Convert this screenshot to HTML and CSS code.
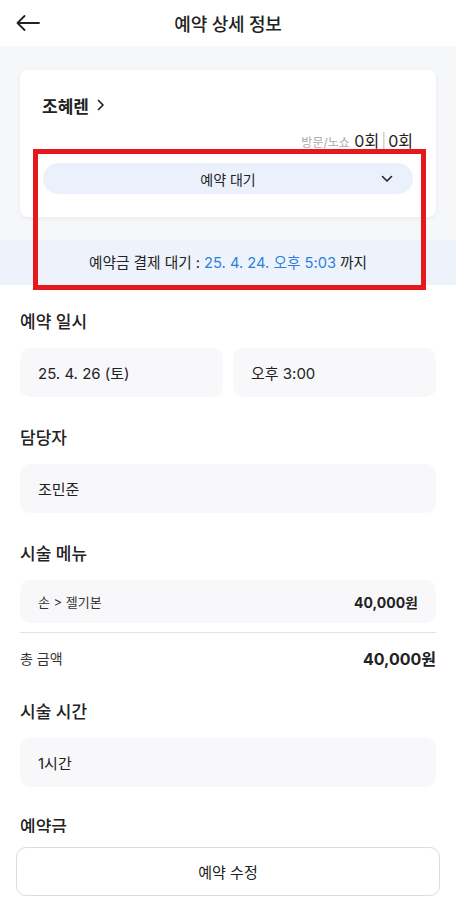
FILE: index.html
```html
<!DOCTYPE html>
<html lang="ko">
<head>
<meta charset="utf-8">
<title>예약 상세 정보</title>
<link rel="stylesheet" href="styles.css">
</head>
<body>
<div class="app">
  <header class="topbar">
    <button class="back" aria-label="뒤로">
      <svg width="24" height="16" viewBox="0 0 24 16" fill="none" stroke="#222" stroke-width="1.8" stroke-linecap="round" stroke-linejoin="round"><path d="M23 8H1.5M8.5 1L1.5 8l7 7"/></svg>
    </button>
    <h1 class="title">예약 상세 정보</h1>
  </header>

  <section class="hero">
    <div class="card">
      <div class="name">조혜렌 <svg class="name-chev" width="9" height="14" viewBox="0 0 9 14" fill="none" stroke="#222" stroke-width="1.7" stroke-linecap="round" stroke-linejoin="round"><path d="M2.5 2.5l4.5 4.5-4.5 4.5"/></svg></div>
      <div class="visits"><span class="visits-label">방문/노쇼</span> <span class="visits-num">0회</span><span class="visits-sep">|</span><span class="visits-num">0회</span></div>
      <div class="status">
        <span>예약 대기</span>
        <svg class="status-chev" width="12" height="8" viewBox="0 0 12 8" fill="none" stroke="#222" stroke-width="1.6" stroke-linecap="round" stroke-linejoin="round"><path d="M1.5 1.5L6 6l4.5-4.5"/></svg>
      </div>
    </div>
  </section>
  <div class="notice">예약금 결제 대기 : <span class="blue">25. 4. 24. 오후 5:03</span> 까지</div>

  <main class="content">
    <h2 class="label">예약 일시</h2>
    <div class="row2">
      <div class="box">25. 4. 26 (토)</div>
      <div class="box">오후 3:00</div>
    </div>

    <h2 class="label">담당자</h2>
    <div class="box">조민준</div>

    <h2 class="label">시술 메뉴</h2>
    <div class="box menu"><span class="menu-name">손 &gt; 젤기본</span><span class="menu-price">40,000원</span></div>
    <div class="total"><span class="total-label">총 금액</span><span class="total-price">40,000원</span></div>

    <h2 class="label">시술 시간</h2>
    <div class="box">1시간</div>

    <h2 class="label">예약금</h2>
  </main>

  <footer class="bottom">
    <button class="edit">예약 수정</button>
  </footer>

  <div class="highlight"></div>
</div>
</body>
</html>
```
FILE: styles.css
```css
* { box-sizing: border-box; }
html, body { margin: 0; padding: 0; }
body {
  font-family: "Inter", "Noto Sans CJK KR", sans-serif;
  color: #222;
  background: #fff;
  width: 456px;
  height: 908px;
  overflow: hidden;
}
.app { position: relative; width: 456px; height: 908px; overflow: hidden; }

.topbar {
  height: 46px;
  display: flex;
  align-items: center;
  justify-content: center;
  position: relative;
}
.back {
  position: absolute;
  left: 16px;
  top: 14px;
  border: 0;
  background: none;
  padding: 0;
  width: 26px;
  height: 18px;
  display: flex;
  align-items: center;
}
.title {
  margin: 0;
  font-size: 18px;
  font-weight: 500;
  letter-spacing: -0.2px;
  color: #222;
}

.hero {
  background: #f6f7f9;
  padding: 24px 20px 23px;
}
.card {
  background: #fff;
  border-radius: 8px;
  box-shadow: 0 1px 4px rgba(40, 60, 110, 0.07);
  padding: 24px 22px 22px;
  height: 147px;
}
.name {
  font-size: 17px;
  font-weight: 600;
  display: flex;
  align-items: center;
  gap: 7px;
  height: 22px;
}
.visits {
  text-align: right;
  margin-top: 15px;
  height: 20px;
  line-height: 20px;
  margin-right: 1px;
}
.visits-label { font-size: 12px; color: #aaa; }
.visits-num { font-size: 16px; color: #222; }
.visits-sep { font-size: 16px; color: #bbb; margin: 0 2px; font-weight: 300; }
.status {
  margin-top: 12px;
  margin-left: 1px;
  margin-right: 1px;
  height: 31px;
  border-radius: 16px;
  background: #eaf1fc;
  display: flex;
  align-items: center;
  justify-content: center;
  position: relative;
  font-size: 14px;
  color: #222;
}
.status-chev { position: absolute; right: 20px; top: 12px; }

.notice {
  background: #eef3fb;
  height: 45px;
  display: flex;
  align-items: center;
  justify-content: center;
  font-size: 14.7px;
  color: #222;
  padding-bottom: 2px;
}
.blue { color: #2c7fe0; margin: 0 4px; }

.content { padding: 0 20px; }
.label {
  margin: 0;
  font-size: 17px;
  font-weight: 500;
  color: #222;
  height: 22px;
  line-height: 22px;
  margin-top: 26px;
  margin-bottom: 15px;
}
.row2 { display: grid; grid-template-columns: 1fr 1fr; gap: 10px; }
.box {
  background: #f8f8fa;
  border-radius: 10px;
  height: 49px;
  display: flex;
  align-items: center;
  padding: 0 18px;
  font-size: 15px;
  color: #222;
}
.row2 + .label, .box + .label { margin-top: 30px; }
.menu { height: 43px; justify-content: space-between; margin-top: 1px; }
.menu-name { font-size: 13px; color: #333; }
.menu-price { font-size: 14px; font-weight: 700; }
.total {
  margin-top: 9px;
  border-top: 1px solid #e3e3e5;
  display: flex;
  justify-content: space-between;
  align-items: center;
  height: 51px;
}
.total-label { font-size: 14px; color: #333; }
.total-price { font-size: 16px; font-weight: 700; }
.total + .label { margin-top: 18px; }
.total + .label + .box + .label { margin-top: 29px; }

.bottom {
  position: absolute;
  left: 0;
  right: 0;
  bottom: 0;
  height: 75px;
  background: #fff;
  padding: 14px 16px 0;
}
.edit {
  width: 100%;
  height: 49px;
  border: 1px solid #dcdcdf;
  border-radius: 10px;
  background: #fff;
  font-family: inherit;
  font-size: 15px;
  color: #222;
}

.highlight {
  position: absolute;
  left: 33px;
  top: 149px;
  width: 393px;
  height: 141px;
  border: 5px solid #e5191c;
  pointer-events: none;
}
```
